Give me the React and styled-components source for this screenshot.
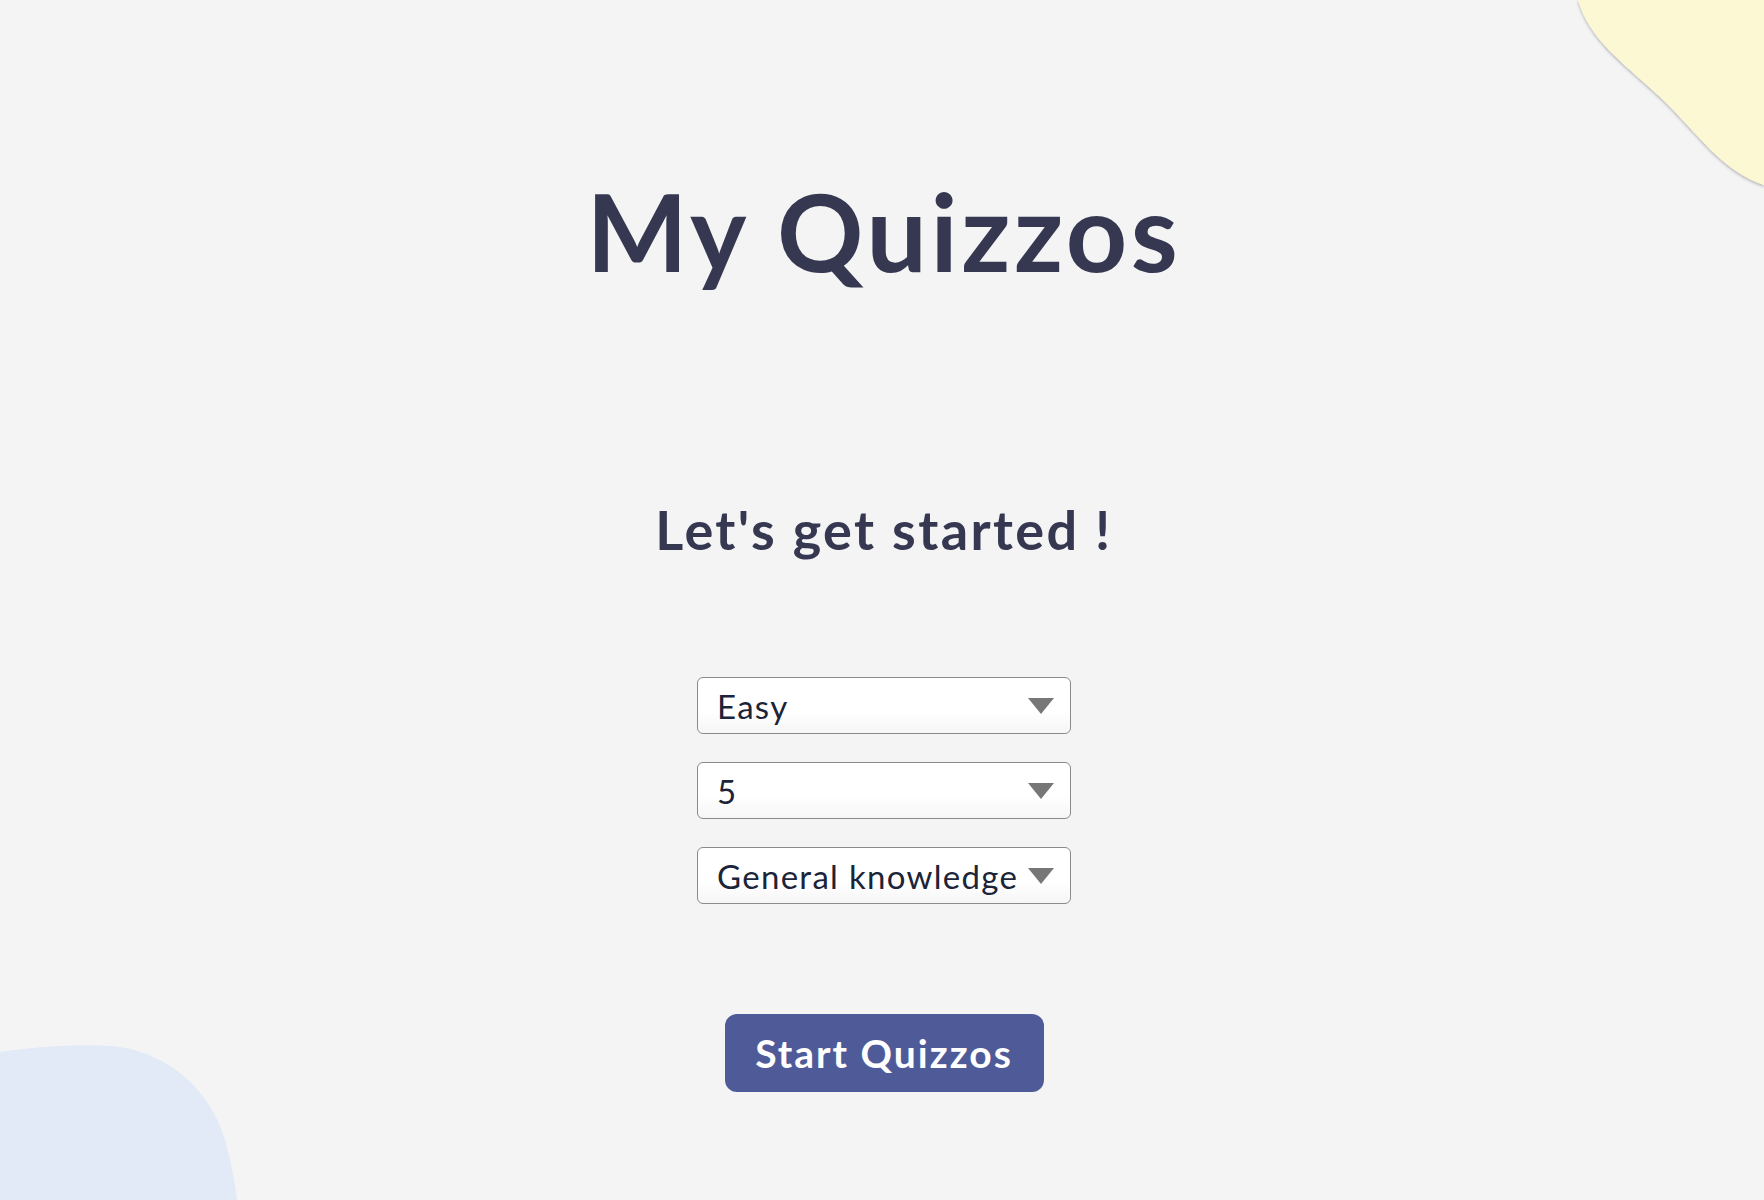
import React, { useState } from "react";
import styled, { createGlobalStyle } from "styled-components";

const GlobalStyle = createGlobalStyle`
  html, body {
    margin: 0;
    padding: 0;
    background: #f4f4f4;
  }

  * {
    box-sizing: border-box;
  }
`;

const Dropdown = ({ value, options, onChange }) => {
  return (
    <SelectWrap>
      <Select value={value} onChange={(e) => onChange(e.target.value)}>
        {options.map((o) => (<option key={o} value={o}>{o}</option>))}
      </Select>
      <Arrow viewBox="0 0 26 16" aria-hidden="true">
        <polygon points="0,0 26,0 13,16" fill="#777" />
      </Arrow>
    </SelectWrap>
  );
};

export default function App() {
  const [level, setLevel] = useState("Easy");
  const [count, setCount] = useState("5");
  const [topic, setTopic] = useState("General knowledge");

  return (
    <Page>
      <GlobalStyle />
      <BlobTop viewBox="0 0 190 190" aria-hidden="true">
        <defs>
          <filter id="blobShadow" x="-20%" y="-20%" width="140%" height="140%">
            <feDropShadow dx="0" dy="1.5" stdDeviation="1.5" floodColor="#000" floodOpacity="0.3" />
          </filter>
        </defs>
        <path d="M4,0 C16,40 46,60 86,97 C126,135 146,170 190,185 L190,0 Z" fill="#fdf8d4" filter="url(#blobShadow)" />
      </BlobTop>
      <BlobBottom viewBox="0 0 240 160" aria-hidden="true">
        <path d="M0,12 C40,6 90,3 120,7 C170,15 210,50 225,100 C232,125 235,145 237,160 L0,160 Z" fill="#e1eaf6" />
      </BlobBottom>

      <Title>My Quizzos</Title>
      <Subtitle>Let's get started !</Subtitle>

      <Form>
        <Dropdown value={level} options={["Easy", "Medium", "Hard"]} onChange={setLevel} />
        <Dropdown value={count} options={["5", "10", "15", "20"]} onChange={setCount} />
        <Dropdown value={topic} options={["General knowledge", "History", "Science", "Sports"]} onChange={setTopic} />
      </Form>

      <StartButton type="button">Start Quizzos</StartButton>
    </Page>
  );
}

const Page = styled.main`
  position: relative;
  min-height: 100vh;
  overflow: hidden;
  display: flex;
  flex-direction: column;
  align-items: center;
  padding: 167px 0 0 4px;
  font-family: Lato, "Noto Sans", sans-serif;
  color: #363852;
`;

const BlobTop = styled.svg`
  position: absolute;
  top: 0;
  right: 0;
  width: 190px;
  height: 190px;
`;

const BlobBottom = styled.svg`
  position: absolute;
  left: 0;
  bottom: 0;
  width: 240px;
  height: 160px;
`;

const Title = styled.h1`
  margin: 0;
  font-size: 107px;
  font-weight: 700;
  line-height: 1.2;
  letter-spacing: 3.6px;
`;

const Subtitle = styled.h2`
  margin: 203px 0 0;
  font-size: 54px;
  font-weight: 700;
  line-height: 1.2;
  letter-spacing: 2.4px;
`;

const Form = styled.form`
  margin-top: 114px;
  display: flex;
  flex-direction: column;
  gap: 28px;
`;

const SelectWrap = styled.div`
  position: relative;
  width: 374px;
  height: 57px;
`;

const Select = styled.select`
  appearance: none;
  -webkit-appearance: none;
  width: 100%;
  height: 100%;
  padding: 0 40px 0 19px;
  border: 1px solid #8a8a8a;
  border-radius: 6px;
  background: linear-gradient(#ffffff 60%, #f6f6f6);
  font-family: Lato, "Noto Sans", sans-serif;
  font-size: 33px;
  letter-spacing: 1.3px;
  color: #1b2438;
  outline: none;
  cursor: pointer;
`;

const Arrow = styled.svg`
  position: absolute;
  top: 21px;
  right: 17px;
  width: 26px;
  height: 16px;
  pointer-events: none;
`;

const StartButton = styled.button`
  margin-top: 110px;
  width: 319px;
  height: 78px;
  border: none;
  border-radius: 12px;
  background: #4f5b99;
  color: #fff;
  font-family: Lato, "Noto Sans", sans-serif;
  font-size: 39px;
  font-weight: 700;
  letter-spacing: 2px;
  cursor: pointer;
`;
